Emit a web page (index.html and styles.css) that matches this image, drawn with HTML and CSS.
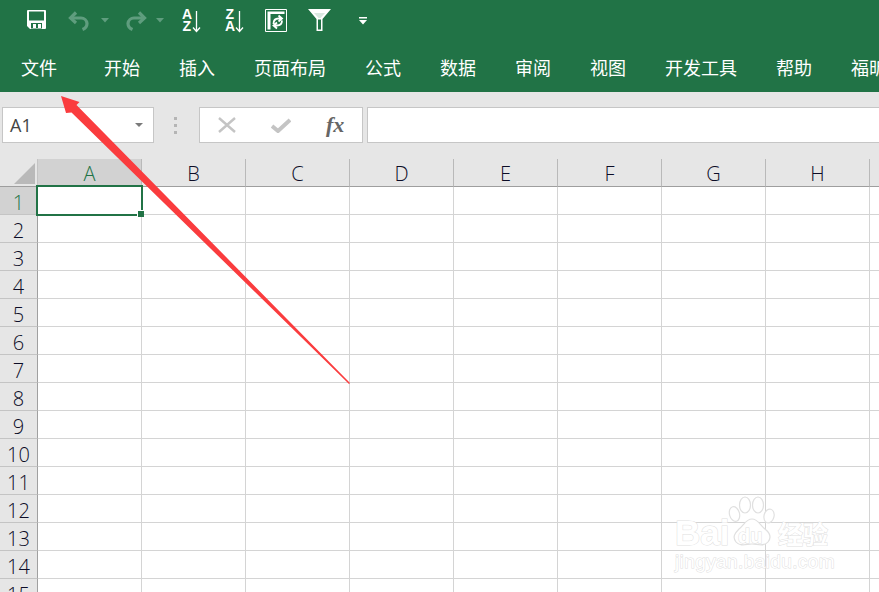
FILE: index.html
```html
<!DOCTYPE html>
<html lang="zh-CN">
<head>
<meta charset="utf-8">
<title>Excel</title>
<link rel="stylesheet" href="styles.css">
</head>
<body>
<div class="app">
  <header class="ribbon">
    <div class="qat">
      <svg class="ic save" width="19" height="19" viewBox="0 0 19 19"><path d="M1 0h17a1 1 0 0 1 1 1v17a1 1 0 0 1-1 1H3l-3-3V1a1 1 0 0 1 1-1z" fill="#fff"/><path d="M2 1.500h15v9H2z" fill="#217346"/><path d="M4 13h11v5.500H4z" fill="#217346"/><path d="M6 14h3v4H6zM11 14h3v4h-3z" fill="#fff"/></svg>
      <svg class="ic undo" width="23" height="20" viewBox="0 0 23 20" fill="none" stroke="#5f9d7e" stroke-width="3.200"><path d="M8 1.500 2.500 7 8 12"/><path d="M3 7h10a6 6 0 0 1 6 5.500c0 3-2 5-4.500 6"/></svg>
      <svg class="ic caret-a" width="8" height="5" viewBox="0 0 8 5"><path d="M0 0h8L4 4.500z" fill="#5f9d7e"/></svg>
      <svg class="ic redo" width="23" height="20" viewBox="0 0 23 20" fill="none" stroke="#5f9d7e" stroke-width="3.200"><path d="M15 1.500 20.500 7 15 12"/><path d="M20 7H10a6 6 0 0 0-6 5.500c0 3 2 5 4.500 6"/></svg>
      <svg class="ic caret-b" width="8" height="5" viewBox="0 0 8 5"><path d="M0 0h8L4 4.500z" fill="#5f9d7e"/></svg>
      <svg class="ic sort-a" width="21" height="30" viewBox="0 0 21 30"><text class="sort-text" x="0" y="13">A</text><text class="sort-text" x="0.500" y="25">Z</text><path d="M14.500 5v20M11 21.500l3.500 4 3.500-4" fill="none" stroke="#fff" stroke-width="1.300"/></svg>
      <svg class="ic sort-z" width="21" height="30" viewBox="0 0 21 30"><text class="sort-text" x="0.500" y="13">Z</text><text class="sort-text" x="0" y="25">A</text><path d="M14.500 5v20M11 21.500l3.500 4 3.500-4" fill="none" stroke="#fff" stroke-width="1.300"/></svg>
      <svg class="ic refresh" width="22" height="23" viewBox="0 0 22 23"><path d="M.500.500h21v22H.500z" fill="none" stroke="#fff"/><path d="M2.500 2.500h17v2.500h-17zM2.500 5h3v15.500h-3z" fill="#fff"/><path d="M8.500 15c0-3.500 2-5.500 5-5.500h2.500M13.500 6.500l3.500 3-3.500 3M17 11.500c0 3-1.500 5-5 5H9.500M12 13.500l-3.500 3 3.500 3" fill="none" stroke="#fff" stroke-width="1.800"/></svg>
      <svg class="ic funnel" width="23" height="22" viewBox="0 0 23 22"><path d="M0 0h23l-8.500 10v12h-6V10z" fill="#fff"/><path d="M10 10.500h3V20.500h-3z" fill="#217346"/><path d="M6 4h11l-4.500 5h-2z" fill="#d9e8e0"/></svg>
      <svg class="ic more" width="8" height="8" viewBox="0 0 8 8"><path d="M0 0h8v1.500H0zM0 3h8L4 7.500z" fill="#fff"/></svg>
    </div>
    <nav class="tabs">
      <span class="tab tab-file">文件</span>
      <span class="tab">开始</span>
      <span class="tab">插入</span>
      <span class="tab">页面布局</span>
      <span class="tab">公式</span>
      <span class="tab">数据</span>
      <span class="tab">审阅</span>
      <span class="tab">视图</span>
      <span class="tab">开发工具</span>
      <span class="tab">帮助</span>
      <span class="tab">福昕</span>
    </nav>
  </header>

  <section class="fbar">
    <div class="namebox"><span>A1</span><svg width="8" height="4" viewBox="0 0 8 4"><path d="M0 0h8L4 4z" fill="#7a7a7a"/></svg></div>
    <div class="grip"><i></i><i></i><i></i></div>
    <div class="fbtns">
      <svg class="fx-x" width="18" height="16" viewBox="0 0 18 16"><path d="M1 1l16 14M17 1 1 15" stroke="#c4c4c4" stroke-width="2.400" fill="none"/></svg>
      <svg class="fx-c" width="20" height="15" viewBox="0 0 20 15"><path d="M1 8l6 5L19 2" stroke="#c4c4c4" stroke-width="4" fill="none"/></svg>
      <span class="fx">fx</span>
    </div>
    <div class="finput"></div>
  </section>

  <section class="sheet">
    <div class="row head">
      <div class="corner"><svg width="21" height="21" viewBox="0 0 21 21"><path d="M21 0v21H0z" fill="#b9b9b9"/></svg></div>
      <div class="ch on">A</div><div class="ch">B</div><div class="ch">C</div><div class="ch">D</div><div class="ch">E</div><div class="ch">F</div><div class="ch">G</div><div class="ch">H</div><div class="ch"></div>
    </div>
    <div class="row"><div class="rh on">1</div><div class="c sel"><b class="handle"></b></div><div class="c"></div><div class="c"></div><div class="c"></div><div class="c"></div><div class="c"></div><div class="c"></div><div class="c"></div><div class="c"></div></div>
    <div class="row"><div class="rh">2</div><div class="c"></div><div class="c"></div><div class="c"></div><div class="c"></div><div class="c"></div><div class="c"></div><div class="c"></div><div class="c"></div><div class="c"></div></div>
    <div class="row"><div class="rh">3</div><div class="c"></div><div class="c"></div><div class="c"></div><div class="c"></div><div class="c"></div><div class="c"></div><div class="c"></div><div class="c"></div><div class="c"></div></div>
    <div class="row"><div class="rh">4</div><div class="c"></div><div class="c"></div><div class="c"></div><div class="c"></div><div class="c"></div><div class="c"></div><div class="c"></div><div class="c"></div><div class="c"></div></div>
    <div class="row"><div class="rh">5</div><div class="c"></div><div class="c"></div><div class="c"></div><div class="c"></div><div class="c"></div><div class="c"></div><div class="c"></div><div class="c"></div><div class="c"></div></div>
    <div class="row"><div class="rh">6</div><div class="c"></div><div class="c"></div><div class="c"></div><div class="c"></div><div class="c"></div><div class="c"></div><div class="c"></div><div class="c"></div><div class="c"></div></div>
    <div class="row"><div class="rh">7</div><div class="c"></div><div class="c"></div><div class="c"></div><div class="c"></div><div class="c"></div><div class="c"></div><div class="c"></div><div class="c"></div><div class="c"></div></div>
    <div class="row"><div class="rh">8</div><div class="c"></div><div class="c"></div><div class="c"></div><div class="c"></div><div class="c"></div><div class="c"></div><div class="c"></div><div class="c"></div><div class="c"></div></div>
    <div class="row"><div class="rh">9</div><div class="c"></div><div class="c"></div><div class="c"></div><div class="c"></div><div class="c"></div><div class="c"></div><div class="c"></div><div class="c"></div><div class="c"></div></div>
    <div class="row"><div class="rh">10</div><div class="c"></div><div class="c"></div><div class="c"></div><div class="c"></div><div class="c"></div><div class="c"></div><div class="c"></div><div class="c"></div><div class="c"></div></div>
    <div class="row"><div class="rh">11</div><div class="c"></div><div class="c"></div><div class="c"></div><div class="c"></div><div class="c"></div><div class="c"></div><div class="c"></div><div class="c"></div><div class="c"></div></div>
    <div class="row"><div class="rh">12</div><div class="c"></div><div class="c"></div><div class="c"></div><div class="c"></div><div class="c"></div><div class="c"></div><div class="c"></div><div class="c"></div><div class="c"></div></div>
    <div class="row"><div class="rh">13</div><div class="c"></div><div class="c"></div><div class="c"></div><div class="c"></div><div class="c"></div><div class="c"></div><div class="c"></div><div class="c"></div><div class="c"></div></div>
    <div class="row"><div class="rh">14</div><div class="c"></div><div class="c"></div><div class="c"></div><div class="c"></div><div class="c"></div><div class="c"></div><div class="c"></div><div class="c"></div><div class="c"></div></div>
    <div class="row"><div class="rh">15</div><div class="c"></div><div class="c"></div><div class="c"></div><div class="c"></div><div class="c"></div><div class="c"></div><div class="c"></div><div class="c"></div><div class="c"></div></div>
  </section>

  <svg class="arrow" width="879" height="592" viewBox="0 0 879 592"><path d="M61 96 79.500 102 76.500 105 350 383 349 384 71.500 112.500 66 113z" fill="#fa3c3e"/></svg>

  <div class="mark">
    <span class="m-bai">Bai</span>
    <svg class="paw" width="48" height="52" viewBox="0 0 48 52" fill="#fff" stroke="#e0e0e0" stroke-width="1.200">
      <ellipse cx="6.500" cy="18" rx="5" ry="7.500" transform="rotate(-15 6.500 18)"/>
      <ellipse cx="17" cy="9" rx="5.500" ry="8"/>
      <ellipse cx="30" cy="9" rx="5.500" ry="8"/>
      <ellipse cx="41" cy="20" rx="5" ry="7" transform="rotate(15 41 20)"/>
      <path d="M24 23c6 0 8 6 13 10 5 4 7 8 3 13-4 5-11 2-16 2s-12 3-16-2c-4-5-1-9 3-13 5-4 7-10 13-10z"/>
    </svg>
    <span class="m-du">du</span><span class="m-cn">经验</span>
    <span class="m-url">jingyan.baidu.com</span>
  </div>
</div>
</body>
</html>
```
FILE: styles.css
```css
*, *::after { box-sizing: border-box; }
html, body { margin: 0; height: 100%; overflow: hidden; background: #fff; }
.app {
  position: relative;
  width: 879px;
  height: 592px;
  overflow: hidden;
  font-family: "Noto Sans CJK SC", "Liberation Sans", sans-serif;
}

/* ribbon */
.ribbon { height: 92px; background: #217346; color: #fff; }
.qat { display: flex; align-items: flex-start; height: 48px; padding-left: 27px; }
.ic { display: block; flex: none; }
.save { margin-top: 10px; }
.undo { margin: 11px 0 0 22px; }
.caret-a { margin: 18px 0 0 10px; }
.redo { margin: 11px 0 0 15px; }
.caret-b { margin: 18px 0 0 9px; }
.sort-a { margin: 6px 0 0 18px; }
.sort-z { margin: 6px 0 0 22px; }
.refresh { margin: 9px 0 0 19px; }
.funnel { margin: 9px 0 0 21px; }
.more { margin: 17px 0 0 28px; }
.sort-text { font: 700 14px "Liberation Sans", sans-serif; fill: #fff; }

.tabs { display: flex; gap: 39px; padding-left: 21px; white-space: nowrap; }
.tab { font-size: 18px; line-height: 38px; height: 38px; }
.tab-file { margin-right: 8px; }

/* formula bar */
.fbar { display: flex; height: 67px; padding-top: 15px; background: #e6e6e6; align-items: flex-start; }
.namebox {
  width: 152px; height: 36px; margin-left: 2px;
  display: flex; align-items: center; justify-content: space-between;
  padding: 0 10px 0 7px;
  background: #fff; border: 1px solid #c6c6c6;
  font: 18px "Open Sans", sans-serif; color: #444;
}
.grip { width: 45px; height: 36px; padding-right: 3px; display: flex; flex-direction: column; align-items: center; justify-content: center; gap: 4px; }
.grip i { width: 3px; height: 3px; background: #b5b5b5; display: block; }
.fbtns {
  width: 164px; height: 36px;
  display: flex; align-items: center;
  background: #fff; border: 1px solid #c6c6c6;
  padding-left: 18px;
}
.fx-c { margin-left: 35px; }
.fx {
  margin-left: 35px;
  font: italic 700 22px "Liberation Serif", serif; color: #666;
  line-height: 1;
}
.finput { flex: 1; height: 36px; margin-left: 4px; background: #fff; border: 1px solid #c6c6c6; border-right: 0; }

/* sheet */
.sheet { width: 974px; }
.row { display: flex; height: 28px; }
.corner { width: 38px; height: 28px; padding: 4px 0 0 14px; background: #e6e6e6; border-bottom: 1px solid #9e9e9e; border-right: 1px solid #c4c4c4; }
.corner svg { display: block; }
.ch {
  width: 104px; height: 28px; padding-top: 2px;
  display: flex; align-items: center; justify-content: center;
  background: #e6e6e6;
  border-right: 1px solid #b9b9b9;
  border-bottom: 1px solid #9e9e9e;
  font: 300 20px "Open Sans", sans-serif; color: #0c0c26;
}
.ch.on { background: #d2d2d2; color: #217346; }
.rh {
  width: 38px; height: 28px; padding-top: 3px;
  display: flex; align-items: center; justify-content: center;
  background: #e6e6e6;
  border-right: 1px solid #a0a0a0;
  border-bottom: 1px solid #c4c4c4;
  font: 300 20px "Open Sans", sans-serif; color: #0c0c26;
}
.rh.on { background: #d2d2d2; color: #217346; }
.c { width: 104px; height: 28px; border-right: 1px solid #d4d4d4; border-bottom: 1px solid #d4d4d4; position: relative; }
.sel::after {
  content: "";
  position: absolute; left: -2px; top: -2px; width: 107px; height: 31px;
  border: 2px solid #217346;
}
.handle { position: absolute; z-index: 1; left: 99px; top: 23px; width: 7px; height: 7px; background: #217346; border-left: 1px solid #fff; border-top: 1px solid #fff; }

/* annotation + watermark overlay */
.arrow { position: absolute; left: 0; top: 0; pointer-events: none; }
.mark { position: absolute; left: 0; top: 0; width: 879px; height: 592px; pointer-events: none; }
.mark span { position: absolute; color: #fff; -webkit-text-stroke: 1px #e0e0e0; paint-order: stroke fill; white-space: nowrap; line-height: 1; }
.paw { position: absolute; left: 728px; top: 496px; }
.m-bai { left: 675px; top: 515px; font: 700 35px "Liberation Sans", sans-serif; }
.m-du { left: 738px; top: 526px; font: 700 20px "Liberation Sans", sans-serif; }
.m-cn { left: 778px; top: 521px; font-size: 25px; font-weight: 700; }
.m-url { left: 675px; top: 552px; font: 400 19px "Liberation Sans", sans-serif; letter-spacing: .4px; }
```
